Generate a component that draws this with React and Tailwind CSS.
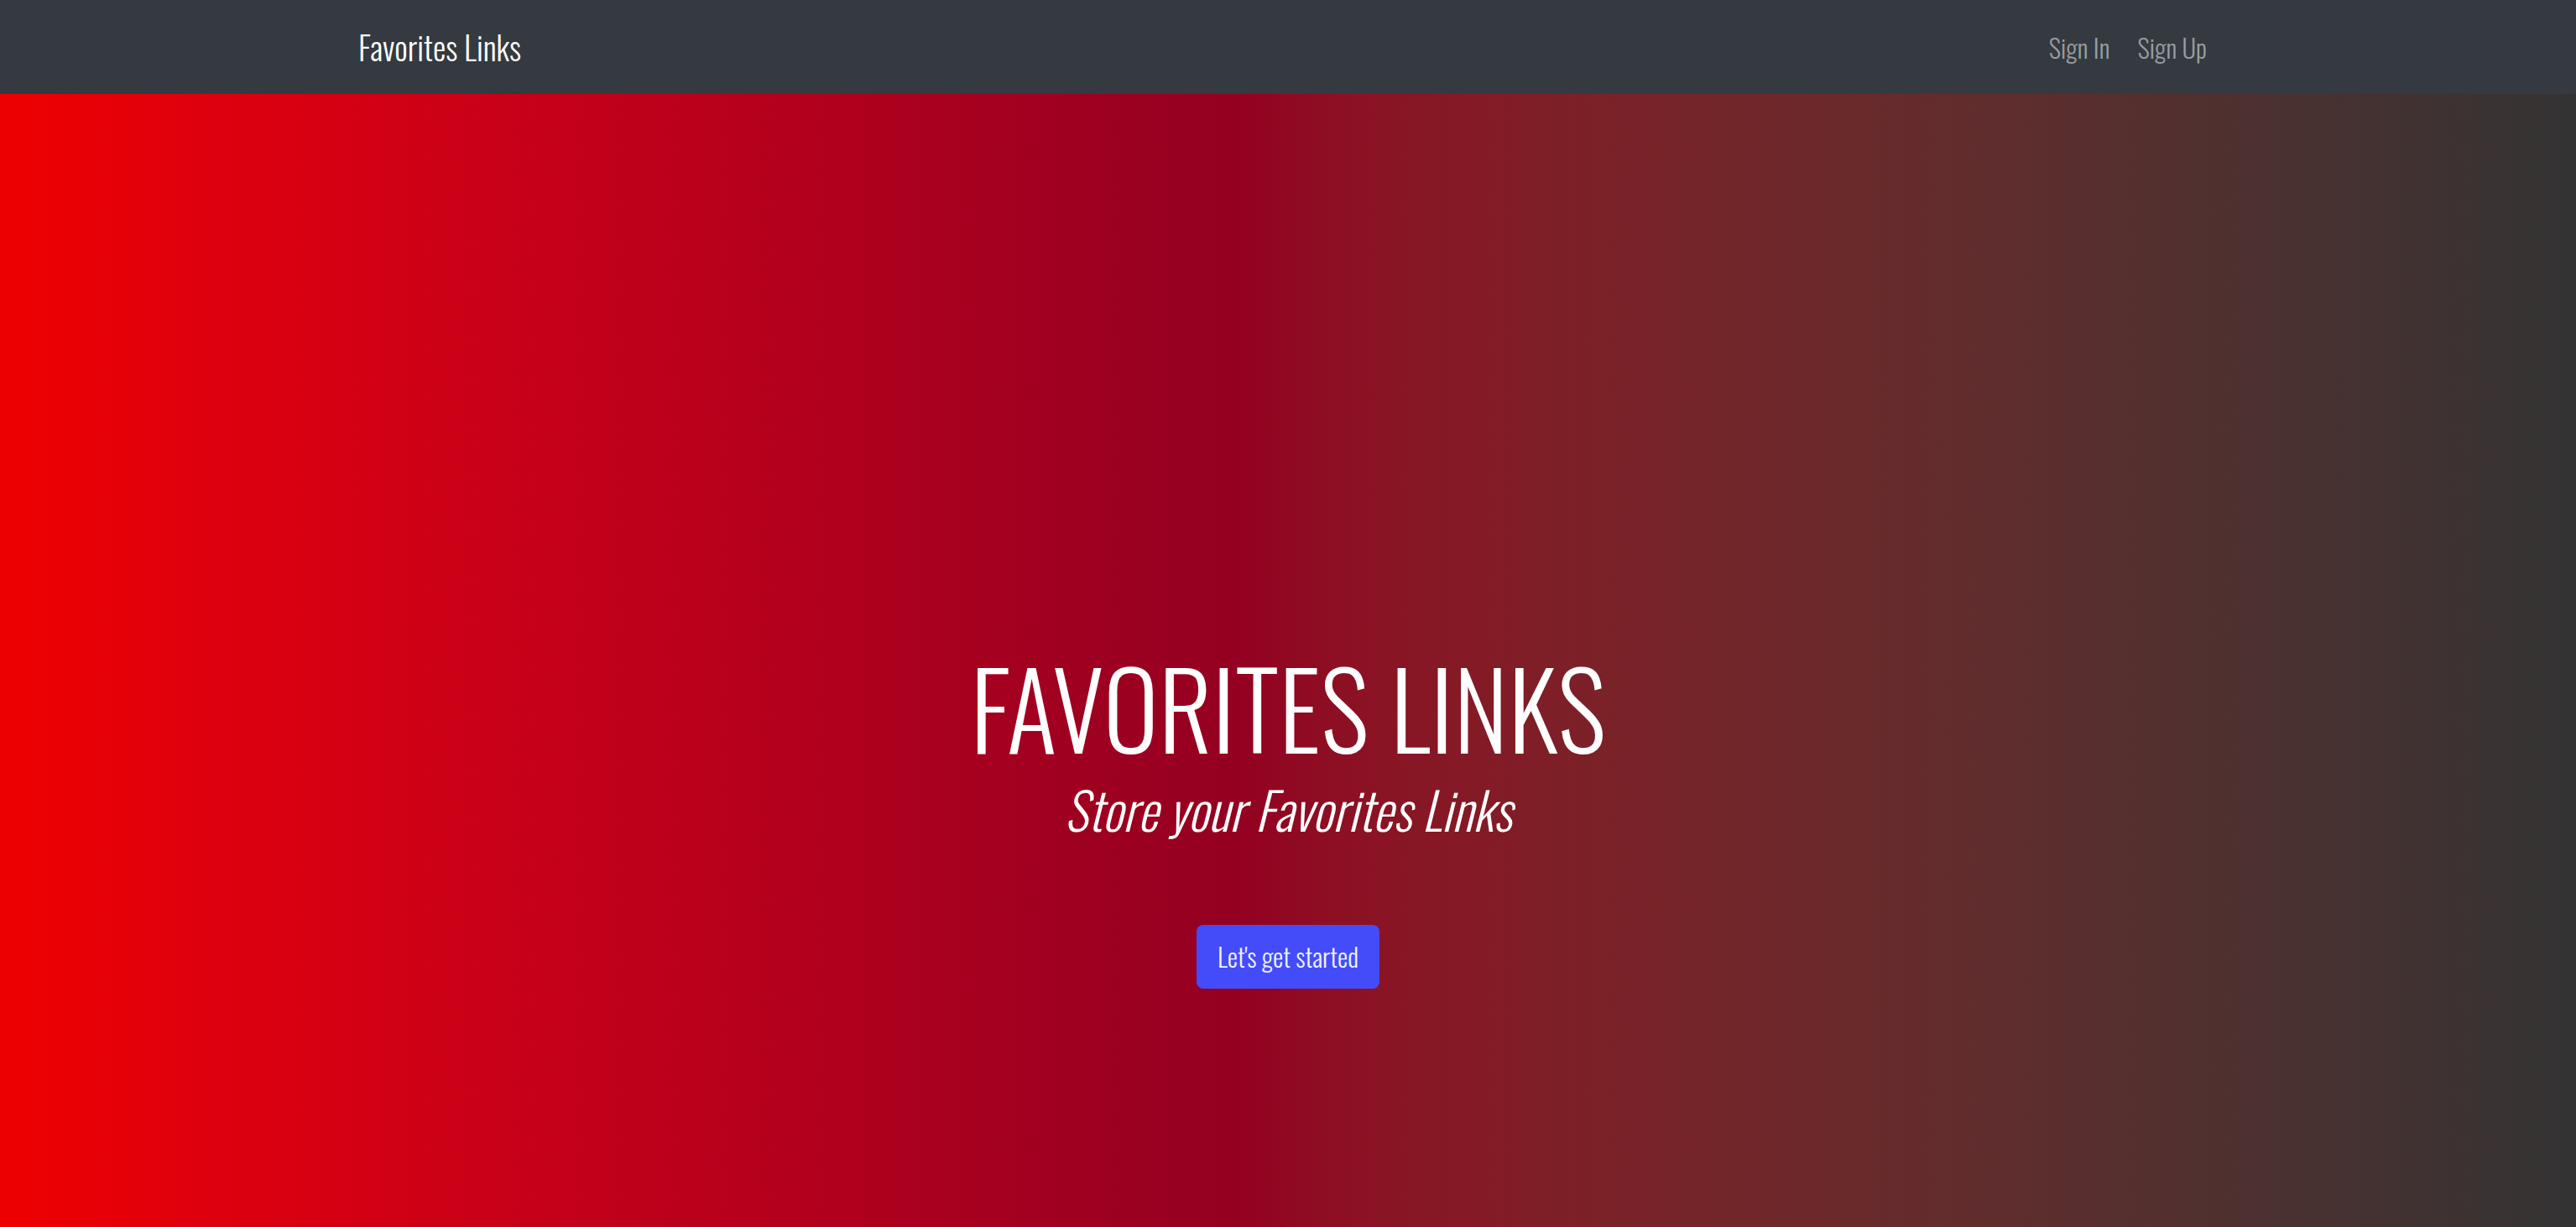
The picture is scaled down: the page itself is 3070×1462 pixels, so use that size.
import React from 'react';

const FONT = "font-['Oswald','Roboto_Condensed','Liberation_Sans_Narrow','DejaVu_Sans_Condensed',sans-serif]";

const Navbar = () => (
  <nav className="h-[112px] bg-[#343a40] flex items-center justify-between pl-[427px] pr-[440px]">
    <a href="#" className="text-[38.7px] font-light text-white leading-none">
      Favorites Links
    </a>
    <div className="flex items-center gap-[33px] text-[31px] font-light text-[#9a9da0] leading-none">
      <a href="#">Sign In</a>
      <a href="#">Sign Up</a>
    </div>
  </nav>
);

export default function App() {
  return (
    <div className={`${FONT} h-[1462px] flex flex-col`}>
      <Navbar />
      {/* hero */}
      <main className="flex-1 bg-linear-to-r from-[#ee0000] via-[#940021] via-48% to-[#333333] flex flex-col items-center justify-center text-white pt-[382px]">
        <h1 className="text-[125px] font-light leading-none uppercase">
          Favorites Links
        </h1>
        <p className="text-[61px] font-light italic leading-none mt-[29px]">
          Store your Favorites Links
        </p>
        <button className="mt-[108px] w-[218px] h-[76px] rounded-[8px] bg-[#444cf9] text-[31px] font-light text-[#eef4ff] leading-none">
          Let's get started
        </button>
      </main>
    </div>
  );
}
